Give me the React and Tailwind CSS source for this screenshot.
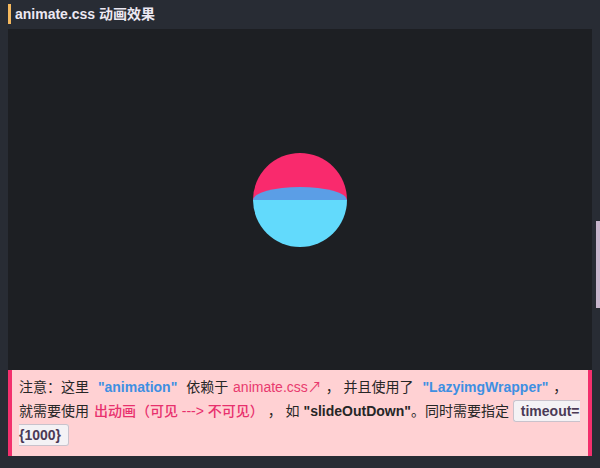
import React from "react";

const font = { fontFamily: '"Liberation Sans", "Noto Sans CJK SC", sans-serif' };

function Ball() {
  return (
    <svg width="96" height="96" viewBox="0 0 96 96">
      <defs>
        <clipPath id="c">
          <circle cx="48" cy="48" r="47" />
        </clipPath>
      </defs>
      <g clipPath="url(#c)">
        <rect x="0" y="0" width="96" height="48" fill="#f92a6d" />
        <rect x="0" y="48" width="96" height="48" fill="#62dafc" />
        <path d="M1 48 A47 13 0 0 1 95 48 Z" fill="#5b9ee6" />
      </g>
    </svg>
  );
}

export default function App() {
  return (
    <div className="relative w-[600px] h-[468px] bg-[#282c34] overflow-hidden" style={font}>
      <div className="pl-2 pr-2">
        <div className="flex items-center h-[29px] pb-[1px]">
          <div className="w-[3px] h-[20px] bg-[#f4b85e] mt-[-1px]" />
          <div className="ml-[4px] text-[14px] font-bold text-[#ece8f2] leading-none mt-[-1px]">
            animate.css 动画效果
          </div>
        </div>
        <div className="h-[341px] bg-[#1d1f23] flex items-center justify-center">
          <Ball />
        </div>
        <div className="h-[86px] bg-[#ffd1d3] border-l-4 border-r-4 border-[#f3306d] pl-[7px] pr-[6px] pt-[5px] text-[14px] leading-[24px] text-[#262626]">
          注意：这里 <span className="font-bold text-[#3e8fe2] mx-[5px]">"animation"</span> 依赖于{" "}
          <span className="text-[#e83a6e] ml-[1px]">animate.css↗</span> ， 并且使用了{" "}
          <span className="font-bold text-[#3e8fe2] mx-[5px]">"LazyimgWrapper"</span>，
          就需要使用 <span className="text-[#e8306d] font-medium ml-[1px]">出动画（可见 ---&gt; 不可见）</span> ， 如{" "}
          <span className="font-bold">"slideOutDown"</span>。同时需要指定{" "}
          <code
            className="font-bold text-[#4b3a56] bg-[#f4f2f5] border border-[#c9c2cc] rounded-[3px] px-[7px] py-[2px] text-[14px]"
            style={font}
          >
            timeout=<wbr />{"{1000}"}
          </code>
        </div>
      </div>
      <div className="absolute right-0 top-[221px] w-[4px] h-[87px] bg-[#c9b6cd]" />
    </div>
  );
}
